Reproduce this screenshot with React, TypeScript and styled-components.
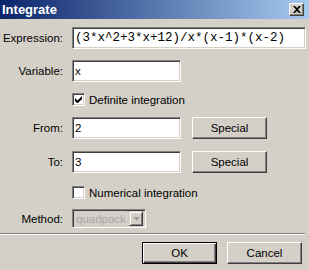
import React from "react";
import styled, { createGlobalStyle } from "styled-components";

const GlobalStyle = createGlobalStyle`
  html, body {
    margin: 0;
    padding: 0;
    background: #d4d0c8;
  }
`;

const Window = styled.div`
  width: 309px;
  height: 270px;
  display: flex;
  flex-direction: column;
  background: #d4d0c8;
  font-family: "Liberation Sans", Arial, sans-serif;
  font-size: 11.5px;
  color: #000;
  overflow: hidden;
`;

const TitleBar = styled.div`
  height: 19px;
  flex: none;
  display: flex;
  align-items: center;
  justify-content: space-between;
  padding: 0 5px 0 2px;
  background: linear-gradient(to right, #0a246a, #a6caf0);
`;

const Title = styled.span`
  color: #fff;
  font-weight: bold;
  font-size: 13px;
`;

const CloseButton = styled.button`
  width: 15px;
  height: 13px;
  padding: 0;
  display: flex;
  align-items: center;
  justify-content: center;
  background: #d4d0c8;
  border: 1px solid;
  border-color: #fff #404040 #404040 #fff;
  box-shadow: inset -1px -1px #808080;
`;

const Form = styled.div`
  display: flex;
  flex-direction: column;
  padding-top: 8px;
`;

const Row = styled.div<{ $space?: number }>`
  display: flex;
  align-items: center;
  gap: 9px;
  margin-top: ${(p) => p.$space ?? 11}px;
`;

const Label = styled.label`
  width: 63px;
  flex: none;
  text-align: right;
  color: #000;
`;

const TextInput = styled.input<{ $wide?: boolean; $mono?: boolean }>`
  box-sizing: border-box;
  width: ${(p) => (p.$wide ? "234px" : "109px")};
  height: 22px;
  margin: 0;
  padding: 0 2px;
  background: #fff;
  border: 1px solid;
  border-color: #808080 #fff #fff #808080;
  box-shadow: inset 1px 1px #404040, inset -1px -1px #d4d0c8;
  outline: none;
  color: #000;
  font-family: ${(p) =>
    p.$mono ? `"Liberation Mono", "Courier New", monospace` : `"Liberation Sans", Arial, sans-serif`};
  font-size: ${(p) => (p.$mono ? "12.5px" : "11.5px")};
`;

const Button = styled.button<{ $default?: boolean; $gap?: number }>`
  box-sizing: border-box;
  width: 75px;
  height: 22px;
  margin: 0 0 0 ${(p) => p.$gap ?? 0}px;
  padding: 0;
  background: #d4d0c8;
  font-family: "Liberation Sans", Arial, sans-serif;
  font-size: 11.5px;
  color: #000;
  border: 1px solid;
  border-color: ${(p) => (p.$default ? "#000" : "#fff #404040 #404040 #fff")};
  box-shadow: ${(p) =>
    p.$default
      ? "inset 1px 1px #fff, inset -1px -1px #404040, inset -2px -2px #808080"
      : "inset -1px -1px #808080"};
`;

const CheckLabel = styled.label`
  display: flex;
  align-items: center;
  gap: 4px;
  height: 13px;
  margin-left: 72px;
`;

const CheckBox = styled.span`
  box-sizing: border-box;
  width: 13px;
  height: 13px;
  display: flex;
  align-items: center;
  justify-content: center;
  background: #fff;
  border: 1px solid;
  border-color: #808080 #fff #fff #808080;
  box-shadow: inset 1px 1px #404040, inset -1px -1px #d4d0c8;
`;

const Select = styled.div`
  box-sizing: border-box;
  width: 74px;
  height: 19px;
  display: flex;
  align-items: center;
  justify-content: space-between;
  padding: 2px 2px 2px 3px;
  border: 1px solid;
  border-color: #808080 #fff #fff #808080;
  box-shadow: inset 1px 1px #404040, inset -1px -1px #d4d0c8;
  color: #a8a8a8;
`;

const SelectArrow = styled.span`
  box-sizing: border-box;
  width: 14px;
  height: 15px;
  display: flex;
  align-items: center;
  justify-content: center;
  border: 1px solid;
  border-color: #d4d0c8 #404040 #404040 #d4d0c8;
  box-shadow: inset 1px 1px #fff, inset -1px -1px #808080;
`;

const Separator = styled.div`
  height: 0;
  margin: 5px 4px 0 0;
  border-top: 1px solid #808080;
  border-bottom: 1px solid #fff;
`;

const Footer = styled.div`
  display: flex;
  justify-content: flex-end;
  gap: 10px;
  margin-top: 7px;
  padding-right: 7px;
`;

const Check = () => (
  <svg width="7" height="7" viewBox="0 0 7 7">
    <path d="M0 2v3l2 2h1l4-4V0L2.5 4.5z" fill="#000" />
  </svg>
);

const Checkbox = ({ checked, label }: { checked?: boolean; label: string }) => (
  <CheckLabel>
    <CheckBox>{checked ? <Check /> : null}</CheckBox>
    {label}
  </CheckLabel>
);

export default function App() {
  return (
    <>
      <GlobalStyle />
      <Window>
        <TitleBar>
          <Title>Integrate</Title>
          <CloseButton aria-label="Close">
            <svg width="8" height="7" viewBox="0 0 8 7">
              <path d="M0 0h2l2 2 2-2h2L5 3.5 8 7H6L4 5 2 7H0l3-3.5z" fill="#000" />
            </svg>
          </CloseButton>
        </TitleBar>
        <Form>
          <Row $space={0}>
            <Label>Expression:</Label>
            <TextInput $wide $mono readOnly value="(3*x^2+3*x+12)/x*(x-1)*(x-2)" />
          </Row>
          <Row>
            <Label>Variable:</Label>
            <TextInput readOnly value="x" />
          </Row>
          <Row>
            <Checkbox checked label="Definite integration" />
          </Row>
          <Row $space={11}>
            <Label>From:</Label>
            <TextInput readOnly value="2" />
            <Button $gap={2}>Special</Button>
          </Row>
          <Row $space={12}>
            <Label>To:</Label>
            <TextInput readOnly value="3" />
            <Button $gap={2}>Special</Button>
          </Row>
          <Row $space={13}>
            <Checkbox label="Numerical integration" />
          </Row>
          <Row $space={10}>
            <Label>Method:</Label>
            <Select>
              quadpack
              <SelectArrow>
                <svg width="7" height="4" viewBox="0 0 7 4">
                  <path d="M0 0h7L3.5 4z" fill="#a0a0a0" />
                </svg>
              </SelectArrow>
            </Select>
          </Row>
        </Form>
        <Separator />
        <Footer>
          <Button $default>OK</Button>
          <Button>Cancel</Button>
        </Footer>
      </Window>
    </>
  );
}
